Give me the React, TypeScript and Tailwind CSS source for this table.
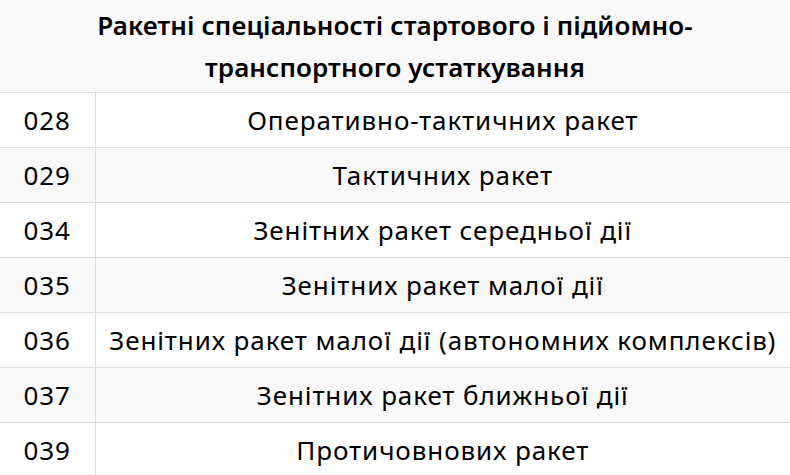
const rows = [
    { code: "028", name: "Оперативно-тактичних ракет" },
    { code: "029", name: "Тактичних ракет" },
    { code: "034", name: "Зенітних ракет середньої дії" },
    { code: "035", name: "Зенітних ракет малої дії" },
    { code: "036", name: "Зенітних ракет малої дії (автономних комплексів)" },
    { code: "037", name: "Зенітних ракет ближньої дії" },
    { code: "039", name: "Протичовнових ракет" },
];

export default function App() {
    return (
        <main className="w-[790px] h-[475px] overflow-hidden bg-white text-black font-['Noto_Sans',sans-serif]">
            <table className="w-full border-collapse">
                <thead>
                    <tr className="bg-[#f8f8f8] border-b border-[#dddddd]">
                        <th colSpan={2} className="px-4 py-1 text-[26px] leading-[42px] font-semibold text-center tracking-[0.1px]">
                            Ракетні спеціальності стартового і підйомно-
                            <br />
                            транспортного устаткування
                        </th>
                    </tr>
                </thead>
                <tbody>
                    {rows.map((r, i) => (
                        <tr key={r.code} className={`border-b border-[#dddddd] ${i % 2 ? "bg-[#f8f8f8]" : "bg-white"}`}>
                            <td className="w-[95px] h-[55px] border-r border-[#dddddd] text-center text-[26px] tracking-[0.9px]">
                                {r.code}
                            </td>
                            <td className="h-[55px] px-[12px] text-center text-[26px] tracking-[0.9px] whitespace-nowrap">
                                {r.name}
                            </td>
                        </tr>
                    ))}
                </tbody>
            </table>
        </main>
    );
}
